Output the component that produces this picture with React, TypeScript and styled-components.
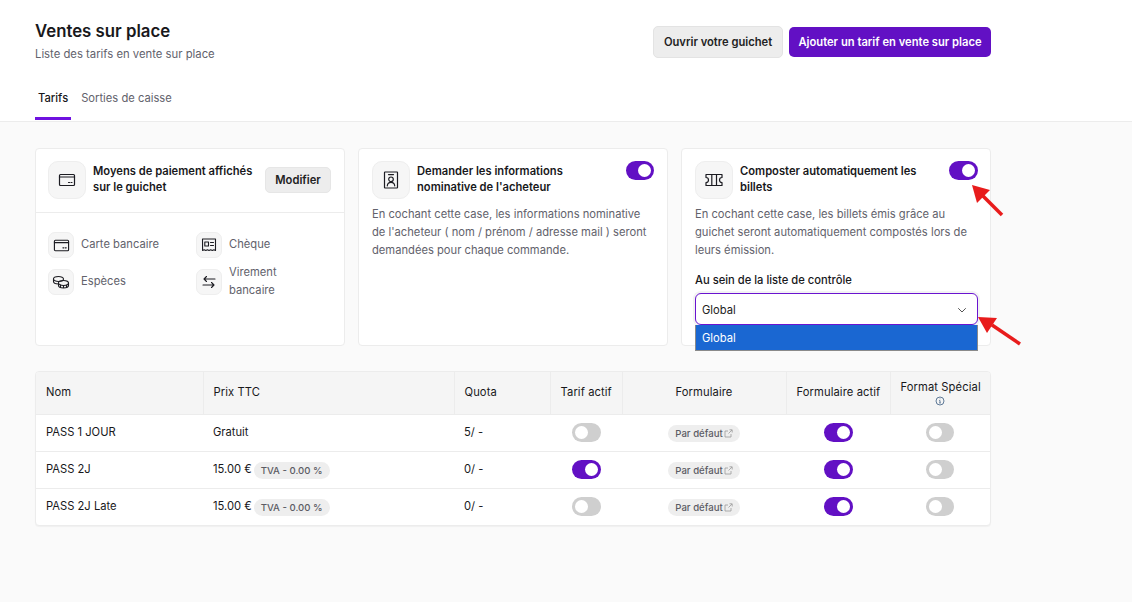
import React from "react";
import styled, { createGlobalStyle } from "styled-components";

const Global = createGlobalStyle`
  html, body { margin: 0; padding: 0; background: #fafafa; }
  body { font-family: Inter, "Liberation Sans", sans-serif; color: #18181b; width: 1132px; height: 602px; overflow: hidden; position: relative; }
  * { box-sizing: border-box; }
`;

const Header = styled.header`
  background: #fff;
  border-bottom: 1px solid #ececec;
  height: 122px;
  padding: 0 35px;
`;
const HeaderInner = styled.div`
  width: 956px;
  display: flex;
  justify-content: space-between;
  padding-top: 21px;
  height: 82px;
`;
const Title = styled.h1`
  margin: 0;
  font-size: 16.8px;
  line-height: 20px;
  font-weight: 600;
  color: #18181b;
`;
const Subtitle = styled.p`
  margin: 5px 0 0;
  font-size: 11.3px;
  line-height: 16px;
  color: #62626c;
`;
const Actions = styled.div`
  display: flex;
  gap: 6px;
  padding-top: 5px;
  align-items: flex-start;
`;
const GreyButton = styled.button`
  width: 130px;
  height: 32px;
  padding: 0;
  border: 1px solid #e3e3e3;
  background: #ededed;
  border-radius: 5px;
  font: 600 11.2px Inter, sans-serif;
  color: #222;
`;
const PurpleButton = styled.button`
  width: 202px;
  height: 30px;
  margin-top: 1px;
  padding: 0;
  border: none;
  background: #6210c4;
  border-radius: 5px;
  font: 600 11.2px Inter, sans-serif;
  color: #fff;
`;
const Tabs = styled.nav`
  display: flex;
  height: 39px;
`;
const Tab = styled.div<{ $active?: boolean }>`
  padding: 9px 3px 0;
  margin-right: 7px;
  font-size: 11.2px;
  line-height: 14px;
  font-weight: ${(p) => (p.$active ? 500 : 400)};
  color: ${(p) => (p.$active ? "#18181b" : "#62626c")};
  border-bottom: ${(p) => (p.$active ? "3px solid #6f12e0" : "3px solid transparent")};
  height: 38px;
`;

const Main = styled.main`
  width: 956px;
  margin-left: 35px;
  padding-top: 26px;
`;
const Cards = styled.div`
  display: grid;
  grid-template-columns: repeat(3, 310px);
  gap: 13px;
  height: 198px;
`;
const Card = styled.section`
  background: #fff;
  border: 1px solid #ececec;
  border-radius: 4px;
  position: relative;
`;
const CardHead = styled.div<{ $pad?: number }>`
  display: flex;
  gap: 7px;
  padding: 12px ${(p) => p.$pad ?? 13}px 0 13px;
  align-items: flex-start;
`;
const PaymentHead = styled(CardHead)`
  height: 64px;
  padding: 12px 13px 0 12px;
  border-bottom: 1px solid #ececec;
`;
const IconBox = styled.span<{ $small?: boolean }>`
  flex: none;
  width: ${(p) => (p.$small ? 26 : 38)}px;
  height: ${(p) => (p.$small ? 26 : 38)}px;
  border-radius: ${(p) => (p.$small ? 7 : 10)}px;
  background: #f6f6f6;
  border: 1px solid #eeeeee;
  display: flex;
  align-items: center;
  justify-content: center;
  color: #1c1c22;
`;
const CardTitle = styled.h2`
  flex: 1;
  margin: 2px 0 0;
  font-size: 11.2px;
  line-height: 16px;
  font-weight: 600;
  color: #18181b;
`;
const Modifier = styled.button`
  flex: none;
  width: 66px;
  height: 26px;
  margin-top: 6px;
  padding: 0;
  border: 1px solid #e6e6e6;
  background: #ededed;
  border-radius: 5px;
  font: 600 11.2px Inter, sans-serif;
  color: #222;
`;
const Methods = styled.div`
  display: grid;
  grid-template-columns: 148px 1fr;
  row-gap: 7px;
  padding: 19px 12px 0;
`;
const Method = styled.div`
  display: flex;
  align-items: center;
  gap: 7px;
  font-size: 11.2px;
  line-height: 18px;
  color: #62626c;
`;
const MethodLabel = styled.span`
  margin-top: -2px;
`;
const Description = styled.p`
  margin: 6px 13px 0;
  font-size: 11.2px;
  line-height: 18px;
  color: #62626c;
`;
const FieldLabel = styled.div`
  margin: 13px 13px 0;
  font-size: 11.2px;
  line-height: 16px;
  font-weight: 500;
  color: #18181b;
`;
const SelectBox = styled.div`
  margin: 5px 12px 0 13px;
  height: 32px;
  padding: 1px 6px 0;
  border: 1.5px solid #6a14d0;
  border-radius: 6px;
  background: #fff;
  box-shadow: 0 0 0 2px #f3f3f3;
  display: flex;
  align-items: center;
  justify-content: space-between;
  font-size: 11.2px;
  color: #222;
`;
const Dropdown = styled.div`
  position: absolute;
  left: 13px;
  top: 176px;
  width: 283px;
  height: 26px;
  background: #1a67d2;
  border: 1px solid #8a8a8a;
  border-top: none;
  color: #fff;
  font-size: 11.2px;
  line-height: 26px;
  padding-left: 6px;
`;
const Switch = styled.span<{ $on?: boolean; $w?: number }>`
  flex: none;
  display: inline-flex;
  align-items: center;
  width: ${(p) => p.$w ?? 29}px;
  height: 19px;
  border-radius: 10px;
  padding: 0 3px;
  background: ${(p) => (p.$on ? "#6210c4" : "#cfcfcf")};
  justify-content: ${(p) => (p.$on ? "flex-end" : "flex-start")};
  &::after {
    content: "";
    width: 13px;
    height: 13px;
    border-radius: 50%;
    background: #fff;
  }
`;

const TableWrap = styled.div`
  margin-top: 25px;
  width: 956px;
  background: #fff;
  border: 1px solid #ececec;
  border-radius: 4px;
  overflow: hidden;
  box-shadow: 0 1px 1px rgba(0,0,0,0.04);
`;
const Table = styled.table`
  width: 100%;
  border-collapse: collapse;
  table-layout: fixed;
`;
const Th = styled.th<{ $center?: boolean; $w: number }>`
  width: ${(p) => p.$w}px;
  height: 42px;
  padding: 0 10px;
  background: #f5f5f5;
  border-left: 1px solid #ececec;
  font-size: 11.2px;
  line-height: 15px;
  font-weight: 400;
  letter-spacing: 0.1px;
  color: #18181b;
  text-align: ${(p) => (p.$center ? "center" : "left")};
  white-space: nowrap;
  &:first-child { border-left: none; }
`;
const Td = styled.td<{ $center?: boolean }>`
  height: 37px;
  padding: 0 10px;
  border-top: 1px solid #ececec;
  font-size: 11.2px;
  color: #18181b;
  text-align: ${(p) => (p.$center ? "center" : "left")};
  white-space: nowrap;
  vertical-align: middle;
`;
const TextTd = styled(Td)`
  padding-bottom: 2px;
`;
const Pill = styled.span`
  display: inline-flex;
  align-items: center;
  height: 17px;
  margin-left: 2px;
  padding: 0 7px;
  border-radius: 9px;
  background: #eeeeee;
  font-size: 9.6px;
  font-weight: 500;
  color: #5c5c64;
  vertical-align: middle;
  transform: translateY(1px);
`;
const FormPill = styled(Pill)`
  margin-left: 0;
  gap: 1px;
`;
const CellSwitch = styled(Switch)`
  vertical-align: middle;
`;
const ArrowLayer = styled.svg`
  position: absolute;
  left: 0;
  top: 0;
  width: 1132px;
  height: 602px;
  pointer-events: none;
`;

const S = { fill: "none", stroke: "currentColor", strokeLinecap: "round", strokeLinejoin: "round" } as const;

const CardIcon = ({ size = 18 }: { size?: number }) => (
  <svg width={size} height={size} viewBox="0 0 18 18" {...S} strokeWidth={1.2}>
    <rect x="1.500" y="3.500" width="15" height="11" rx="1" />
    <path d="M1.500 6h15" />
    <path d="M10.500 11.500h1M13 11.500h1" />
  </svg>
);
const ChequeIcon = () => (
  <svg width="16" height="16" viewBox="0 0 16 16" {...S} strokeWidth={1.1}>
    <path d="M1.500 2h13v11.500l-1.600-.8-1.600.8-1.600-.8-1.700.8-1.600-.8-1.600.8-1.600-.8-1.600.8z" />
    <rect x="3.800" y="5" width="3.700" height="4" />
    <path d="M9.500 5.500h3M9.500 8.500h3" />
  </svg>
);
const CoinsIcon = () => (
  <svg width="18" height="18" viewBox="0 0 18 18" {...S} strokeWidth={1.1}>
    <ellipse cx="6.500" cy="6" rx="5" ry="2.500" />
    <path d="M1.500 6v2.500c0 1.300 2 2.500 5 2.500" />
    <ellipse cx="11.500" cy="10" rx="5" ry="2.500" />
    <path d="M6.500 10v2.500c0 1.300 2.200 2.500 5 2.500s5-1.200 5-2.500V10M11.500 12.500V15M8.500 12v2.500M14.500 12v2.500" />
  </svg>
);
const TransferIcon = () => (
  <svg width="16" height="16" viewBox="0 0 16 16" {...S} strokeWidth={1.1}>
    <path d="M14 5H3M5.500 2.500 3 5l2.500 2.500M2 11h11M10.500 8.500 13 11l-2.500 2.500" />
  </svg>
);
const BadgeIcon = () => (
  <svg width="16" height="18" viewBox="0 0 16 18" {...S} strokeWidth={1.2}>
    <rect x="1.500" y="1" width="13" height="16" rx="0.500" />
    <path d="M5.500 3.600h5" />
    <circle cx="8" cy="8.300" r="2.300" />
    <path d="M4.300 14.800c.2-2 1.800-3.400 3.700-3.400s3.500 1.400 3.700 3.400" />
  </svg>
);
const TicketIcon = () => (
  <svg width="18" height="14" viewBox="0 0 18 14" {...S} strokeWidth={1.2}>
    <path d="M1 1.500h16v3a2.500 2.500 0 0 0 0 5v3H1v-3a2.500 2.500 0 0 0 0-5z" />
    <path d="M6.800 1.500v11M11.500 1.500v11" />
  </svg>
);
const Chevron = () => (
  <svg width="12" height="12" viewBox="0 0 12 12" style={{ marginRight: 3 }} fill="none" stroke="#555" strokeWidth="1" strokeLinecap="round" strokeLinejoin="round">
    <path d="M2.500 4.500 6 8l3.500-3.500" />
  </svg>
);
const External = () => (
  <svg width="9" height="9" viewBox="0 0 9 9" fill="none" stroke="#9a9a9a" strokeWidth="0.8">
    <path d="M7 5v3H1V2h3M5.500 .8h2.700v2.700M8 1 4.500 4.500" />
  </svg>
);
const Info = () => (
  <svg width="10" height="10" viewBox="0 0 10 10" fill="none" stroke="#3a5a80" strokeWidth="0.8" style={{ display: "block", margin: "1px auto 0" }}>
    <circle cx="5" cy="5" r="4" />
    <path d="M5 4.500v2.500M4.300 7h1.400M4.300 4.500H5M5 2.600v.6" />
  </svg>
);

const rows = [
  { name: "PASS 1 JOUR", price: "Gratuit", tva: false, quota: "5/ -", active: false },
  { name: "PASS 2J", price: "15.00 €", tva: true, quota: "0/ -", active: true },
  { name: "PASS 2J Late", price: "15.00 €", tva: true, quota: "0/ -", active: false },
];

export default function App() {
  return (
    <>
      <Global />
      <Header>
        <HeaderInner>
          <div>
            <Title>Ventes sur place</Title>
            <Subtitle>Liste des tarifs en vente sur place</Subtitle>
          </div>
          <Actions>
            <GreyButton>Ouvrir votre guichet</GreyButton>
            <PurpleButton>Ajouter un tarif en vente sur place</PurpleButton>
          </Actions>
        </HeaderInner>
        <Tabs>
          <Tab $active>Tarifs</Tab>
          <Tab>Sorties de caisse</Tab>
        </Tabs>
      </Header>
      <Main>
        <Cards>
          <Card>
            <PaymentHead>
              <IconBox><CardIcon /></IconBox>
              <CardTitle>Moyens de paiement affichés sur le guichet</CardTitle>
              <Modifier>Modifier</Modifier>
            </PaymentHead>
            <Methods>
              <Method><IconBox $small><CardIcon size={17} /></IconBox><MethodLabel>Carte bancaire</MethodLabel></Method>
              <Method><IconBox $small><ChequeIcon /></IconBox><MethodLabel>Chèque</MethodLabel></Method>
              <Method><IconBox $small><CoinsIcon /></IconBox><MethodLabel>Espèces</MethodLabel></Method>
              <Method><IconBox $small><TransferIcon /></IconBox><MethodLabel>Virement<br />bancaire</MethodLabel></Method>
            </Methods>
          </Card>
          <Card>
            <CardHead>
              <IconBox><BadgeIcon /></IconBox>
              <CardTitle>Demander les informations<br />nominative de l'acheteur</CardTitle>
              <Switch $on $w={28} />
            </CardHead>
            <Description>En cochant cette case, les informations nominative de l'acheteur ( nom / prénom / adresse mail ) seront demandées pour chaque commande.</Description>
          </Card>
          <Card>
            <CardHead $pad={12}>
              <IconBox><TicketIcon /></IconBox>
              <CardTitle>Composter automatiquement les billets</CardTitle>
              <Switch $on />
            </CardHead>
            <Description>En cochant cette case, les billets émis grâce au guichet seront automatiquement compostés lors de leurs émission.</Description>
            <FieldLabel>Au sein de la liste de contrôle</FieldLabel>
            <SelectBox>Global<Chevron /></SelectBox>
            <Dropdown>Global</Dropdown>
          </Card>
        </Cards>
        <TableWrap>
          <Table>
            <thead>
              <tr>
                <Th $w={167}>Nom</Th>
                <Th $w={251}>Prix TTC</Th>
                <Th $w={96}>Quota</Th>
                <Th $w={72} $center>Tarif actif</Th>
                <Th $w={164} $center>Formulaire</Th>
                <Th $w={104} $center>Formulaire actif</Th>
                <Th $w={100} $center>Format Spécial<Info /></Th>
              </tr>
            </thead>
            <tbody>
              {rows.map((r) => (
                <tr key={r.name}>
                  <TextTd>{r.name}</TextTd>
                  {r.tva ? <Td>{r.price}<Pill>TVA - 0.00 %</Pill></Td> : <TextTd>{r.price}</TextTd>}
                  <TextTd>{r.quota}</TextTd>
                  <Td $center><CellSwitch $on={r.active} /></Td>
                  <Td $center><FormPill>Par défaut<External /></FormPill></Td>
                  <Td $center><CellSwitch $on /></Td>
                  <Td $center><CellSwitch $w={28} /></Td>
                </tr>
              ))}
            </tbody>
          </Table>
        </TableWrap>
      </Main>
      <ArrowLayer viewBox="0 0 1132 602">
        <path d="M1002 215 981 194" stroke="#e81c1c" strokeWidth="3.500" />
        <path d="M972 185 990 190 977 203z" fill="#e81c1c" />
        <path d="M1020 344 992 325" stroke="#e81c1c" strokeWidth="3.500" />
        <path d="M978 317 997 318 987 333z" fill="#e81c1c" />
      </ArrowLayer>
    </>
  );
}
